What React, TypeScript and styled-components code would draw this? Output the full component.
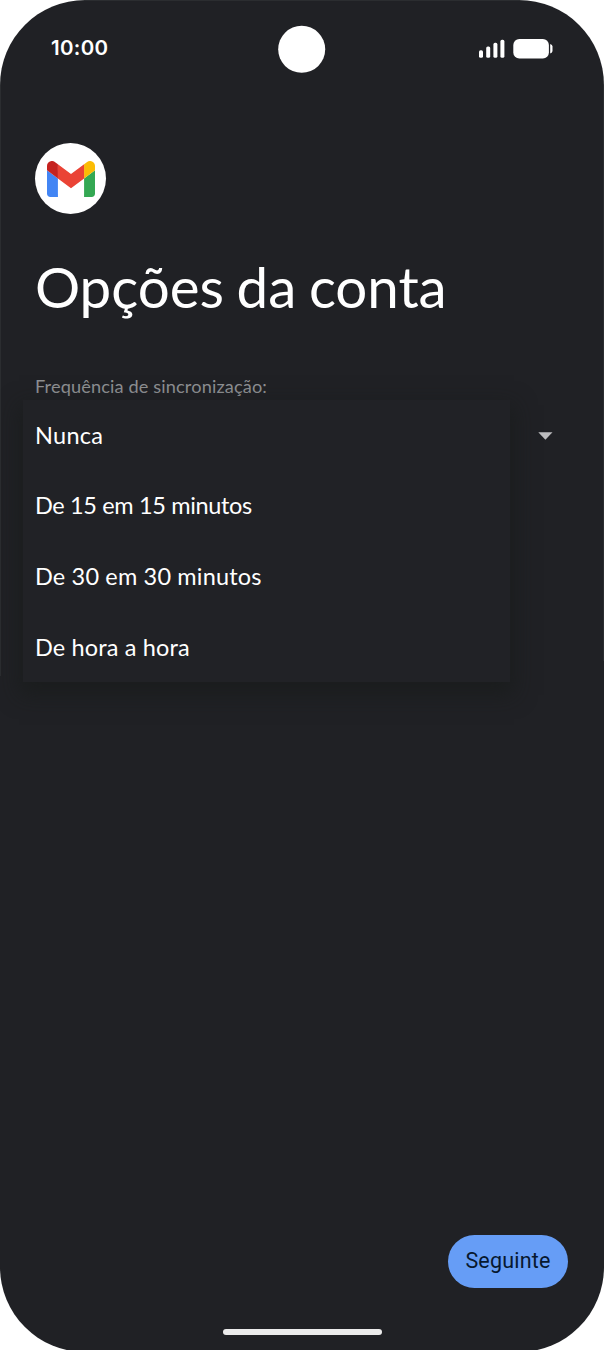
import React from "react";
import styled, { createGlobalStyle } from "styled-components";

const GlobalStyle = createGlobalStyle`
  html, body { margin: 0; padding: 0; background: #fff; }
  * { box-sizing: border-box; }
  body { overflow: hidden; font-family: Lato, "Open Sans", sans-serif; -webkit-font-smoothing: antialiased; }
`;

const Viewport = styled.div`
  height: 1350px;
  overflow: hidden;
`;

const Phone = styled.main`
  display: flex;
  flex-direction: column;
  width: 604px;
  height: 1352px;
  border-radius: 85px;
  overflow: hidden;
  color: #fff;
  background:
    linear-gradient(#2b2d30, #2b2d30) 0 0 / 1px 676px no-repeat,
    linear-gradient(#2b2d30, #2b2d30) 100% 0 / 1px 661px no-repeat,
    linear-gradient(#2b2d30, #2b2d30) 0 0 / 100% 1px no-repeat,
    #202125;
`;

const StatusBar = styled.header`
  display: grid;
  grid-template-columns: 1fr 48px 1fr;
  align-items: center;
  height: 98px;
  padding: 0 51px;
`;

const Clock = styled.time`
  font: 600 20.5px/24px Inter, sans-serif;
  letter-spacing: 0.3px;
  padding-bottom: 2px;
`;

const Camera = styled.svg`
  display: block;
`;

const StatusIcons = styled.svg`
  justify-self: end;
  display: block;
`;

const Content = styled.section`
  flex: 1;
  display: flex;
  flex-direction: column;
  padding: 45px 35px 0;
`;

const Avatar = styled.div`
  width: 71px;
  height: 71px;
  border-radius: 50%;
  background: #fff;
  display: flex;
  align-items: center;
  justify-content: center;
`;

const Title = styled.h1`
  margin: 38px 0 0;
  font-size: 56.5px;
  line-height: 68px;
  font-weight: 400;
  letter-spacing: -0.05px;
  word-spacing: -1.7px;
  white-space: nowrap;
`;

const Label = styled.p`
  margin: 54px 0 0;
  font-size: 18.2px;
  line-height: 24px;
  letter-spacing: 0.12px;
  color: #8e9093;
`;

const Select = styled.div`
  display: flex;
  align-items: flex-start;
  justify-content: space-between;
  margin: 1.5px 0 0 -12px;
`;

const Menu = styled.ul`
  list-style: none;
  margin: 0;
  padding: 0;
  width: 487px;
  background: #212226;
  box-shadow: 0 9px 20px 4px rgba(24, 27, 25, 0.6);
`;

const Option = styled.li<{ $spacing: number }>`
  display: flex;
  align-items: center;
  height: 70.6px;
  padding-left: 12px;
  font-size: 23.5px;
  letter-spacing: ${(p) => p.$spacing}px;
`;

const Caret = styled.svg`
  display: block;
  margin: 32px 16px 0 0;
`;

const Footer = styled.footer`
  display: flex;
  flex-direction: column;
  align-items: center;
  height: 117px;
`;

const NextButton = styled.button`
  align-self: flex-end;
  width: 120px;
  height: 53px;
  margin-right: 36px;
  padding: 0 0 1px;
  border: 0;
  border-radius: 27px;
  background: #669df6;
  color: #07182f;
  font: 450 21.5px/24px Roboto, sans-serif;
  letter-spacing: 0.2px;
`;

const HomeBar = styled.span`
  width: 159px;
  height: 6px;
  margin-top: 41px;
  border-radius: 3px;
  background: #ebebeb;
`;

const options = [
  { text: "Nunca", spacing: 0.3 },
  { text: "De 15 em 15 minutos", spacing: -0.35 },
  { text: "De 30 em 30 minutos", spacing: 0.16 },
  { text: "De hora a hora", spacing: 0.15 },
];

const GmailLogo = () => (
  <svg width="48" height="36" viewBox="52 42 88 66">
    <path fill="#4285f4" d="M58 108h14V74L52 59v43c0 3.32 2.69 6 6 6" />
    <path fill="#34a853" d="M120 108h14c3.32 0 6-2.69 6-6V59l-20 15" />
    <path fill="#fbbc04" d="M120 48v26l20-15v-8c0-7.42-8.47-11.65-14.4-7.2" />
    <path fill="#ea4335" d="M72 74V48l24 18 24-18v26L96 92" />
    <path fill="#c5221f" d="M52 51v8l20 15V48l-5.6-4.2c-5.94-4.45-14.4-.22-14.4 7.2" />
  </svg>
);

export default function App() {
  return (
    <>
      <GlobalStyle />
      <Viewport>
        <Phone>
          <StatusBar>
            <Clock>10:00</Clock>
            <Camera width="48" height="48" viewBox="0 0 48 48">
              <circle cx="23.7" cy="24.3" r="23.5" fill="#fff" />
            </Camera>
            <StatusIcons width="74" height="20" viewBox="0 0 74 20" fill="#fff">
              <rect x="0" y="11.2" width="4" height="7.6" rx="1.6" />
              <rect x="7.2" y="7.5" width="4" height="11.3" rx="1.6" />
              <rect x="14.4" y="3.8" width="4" height="15" rx="1.6" />
              <rect x="21.4" y="0.8" width="4" height="18" rx="1.6" />
              <rect x="34.3" y="0" width="35.6" height="19.5" rx="6" />
              <path d="M71.2 5q2.3 0.6 2.3 2.4v4.6q0 1.8-2.3 2.4z" />
            </StatusIcons>
          </StatusBar>
          <Content>
            <Avatar>
              <GmailLogo />
            </Avatar>
            <Title>Opções da conta</Title>
            <Label>Frequência de sincronização:</Label>
            <Select>
              <Menu>
                {options.map((o) => (
                  <Option key={o.text} $spacing={o.spacing}>
                    {o.text}
                  </Option>
                ))}
              </Menu>
              <Caret width="15" height="8" viewBox="0 0 15 8">
                <path d="M0.3 0.3h14.2L7.4 7.7z" fill="#bdbdbf" />
              </Caret>
            </Select>
          </Content>
          <Footer>
            <NextButton>Seguinte</NextButton>
            <HomeBar />
          </Footer>
        </Phone>
      </Viewport>
    </>
  );
}
